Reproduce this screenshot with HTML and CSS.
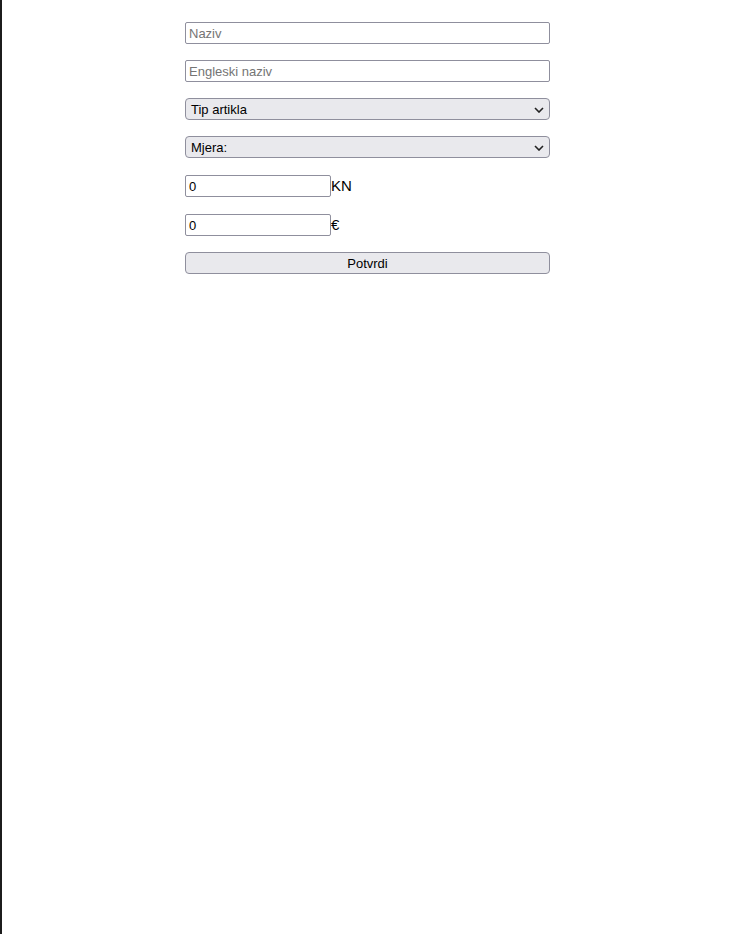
FILE: index.html
```html
<!DOCTYPE html>
<html lang="hr">
<head>
<meta charset="utf-8">
<title>Artikl</title>
<link rel="stylesheet" href="styles.css">
</head>
<body>
<div class="page">
  <form class="form">
    <input class="field" type="text" placeholder="Naziv">
    <input class="field" type="text" placeholder="Engleski naziv">
    <div class="select">
      <span>Tip artikla</span>
      <svg class="chev" width="10" height="6" viewBox="0 0 10 6"><path d="M1 1l4 4 4-4" fill="none" stroke="#222" stroke-width="1.6"/></svg>
    </div>
    <div class="select">
      <span>Mjera:</span>
      <svg class="chev" width="10" height="6" viewBox="0 0 10 6"><path d="M1 1l4 4 4-4" fill="none" stroke="#222" stroke-width="1.6"/></svg>
    </div>
    <div class="price-row">
      <input class="field small" type="text" value="0">
      <span class="unit">KN</span>
    </div>
    <div class="price-row">
      <input class="field small" type="text" value="0">
      <span class="unit">€</span>
    </div>
    <button class="btn" type="button">Potvrdi</button>
  </form>
</div>
</body>
</html>
```
FILE: styles.css
```css
html, body {
  margin: 0;
  padding: 0;
  background: #fff;
}
body {
  border-left: 2px solid #1c1c1c;
  min-height: 934px;
  box-sizing: border-box;
  font-family: "Liberation Sans", Arial, sans-serif;
}
.page {
  display: flex;
  justify-content: center;
  padding-top: 22px;
}
.form {
  width: 365px;
  display: flex;
  flex-direction: column;
  gap: 16px;
  margin-left: 1px;
}
.field {
  box-sizing: border-box;
  height: 22px;
  width: 100%;
  margin: 0;
  border: 1px solid #8f8f9d;
  border-radius: 2px;
  padding: 1px 3px 0;
  font-family: "Liberation Sans", Arial, sans-serif;
  font-size: 13px;
  color: #000;
  background: #fff;
}
.field::placeholder {
  color: #757575;
}
.select {
  box-sizing: border-box;
  height: 22px;
  border: 1px solid #8f8f9d;
  border-radius: 4px;
  background: #e9e9ed;
  display: flex;
  align-items: center;
  justify-content: space-between;
  padding: 1px 5px 0 5px;
  font-size: 13px;
  color: #000;
}
.chev {
  display: block;
}
.price-row {
  display: flex;
  align-items: center;
  height: 23px;
}
.field.small {
  width: 146px;
}
.unit {
  font-size: 15px;
  color: #000;
}
.btn {
  box-sizing: border-box;
  height: 22px;
  width: 100%;
  border: 1px solid #8f8f9d;
  border-radius: 4px;
  background: #e9e9ed;
  font-family: "Liberation Sans", Arial, sans-serif;
  font-size: 13px;
  color: #000;
  padding: 1px 0 0;
  margin: 0;
}
```
